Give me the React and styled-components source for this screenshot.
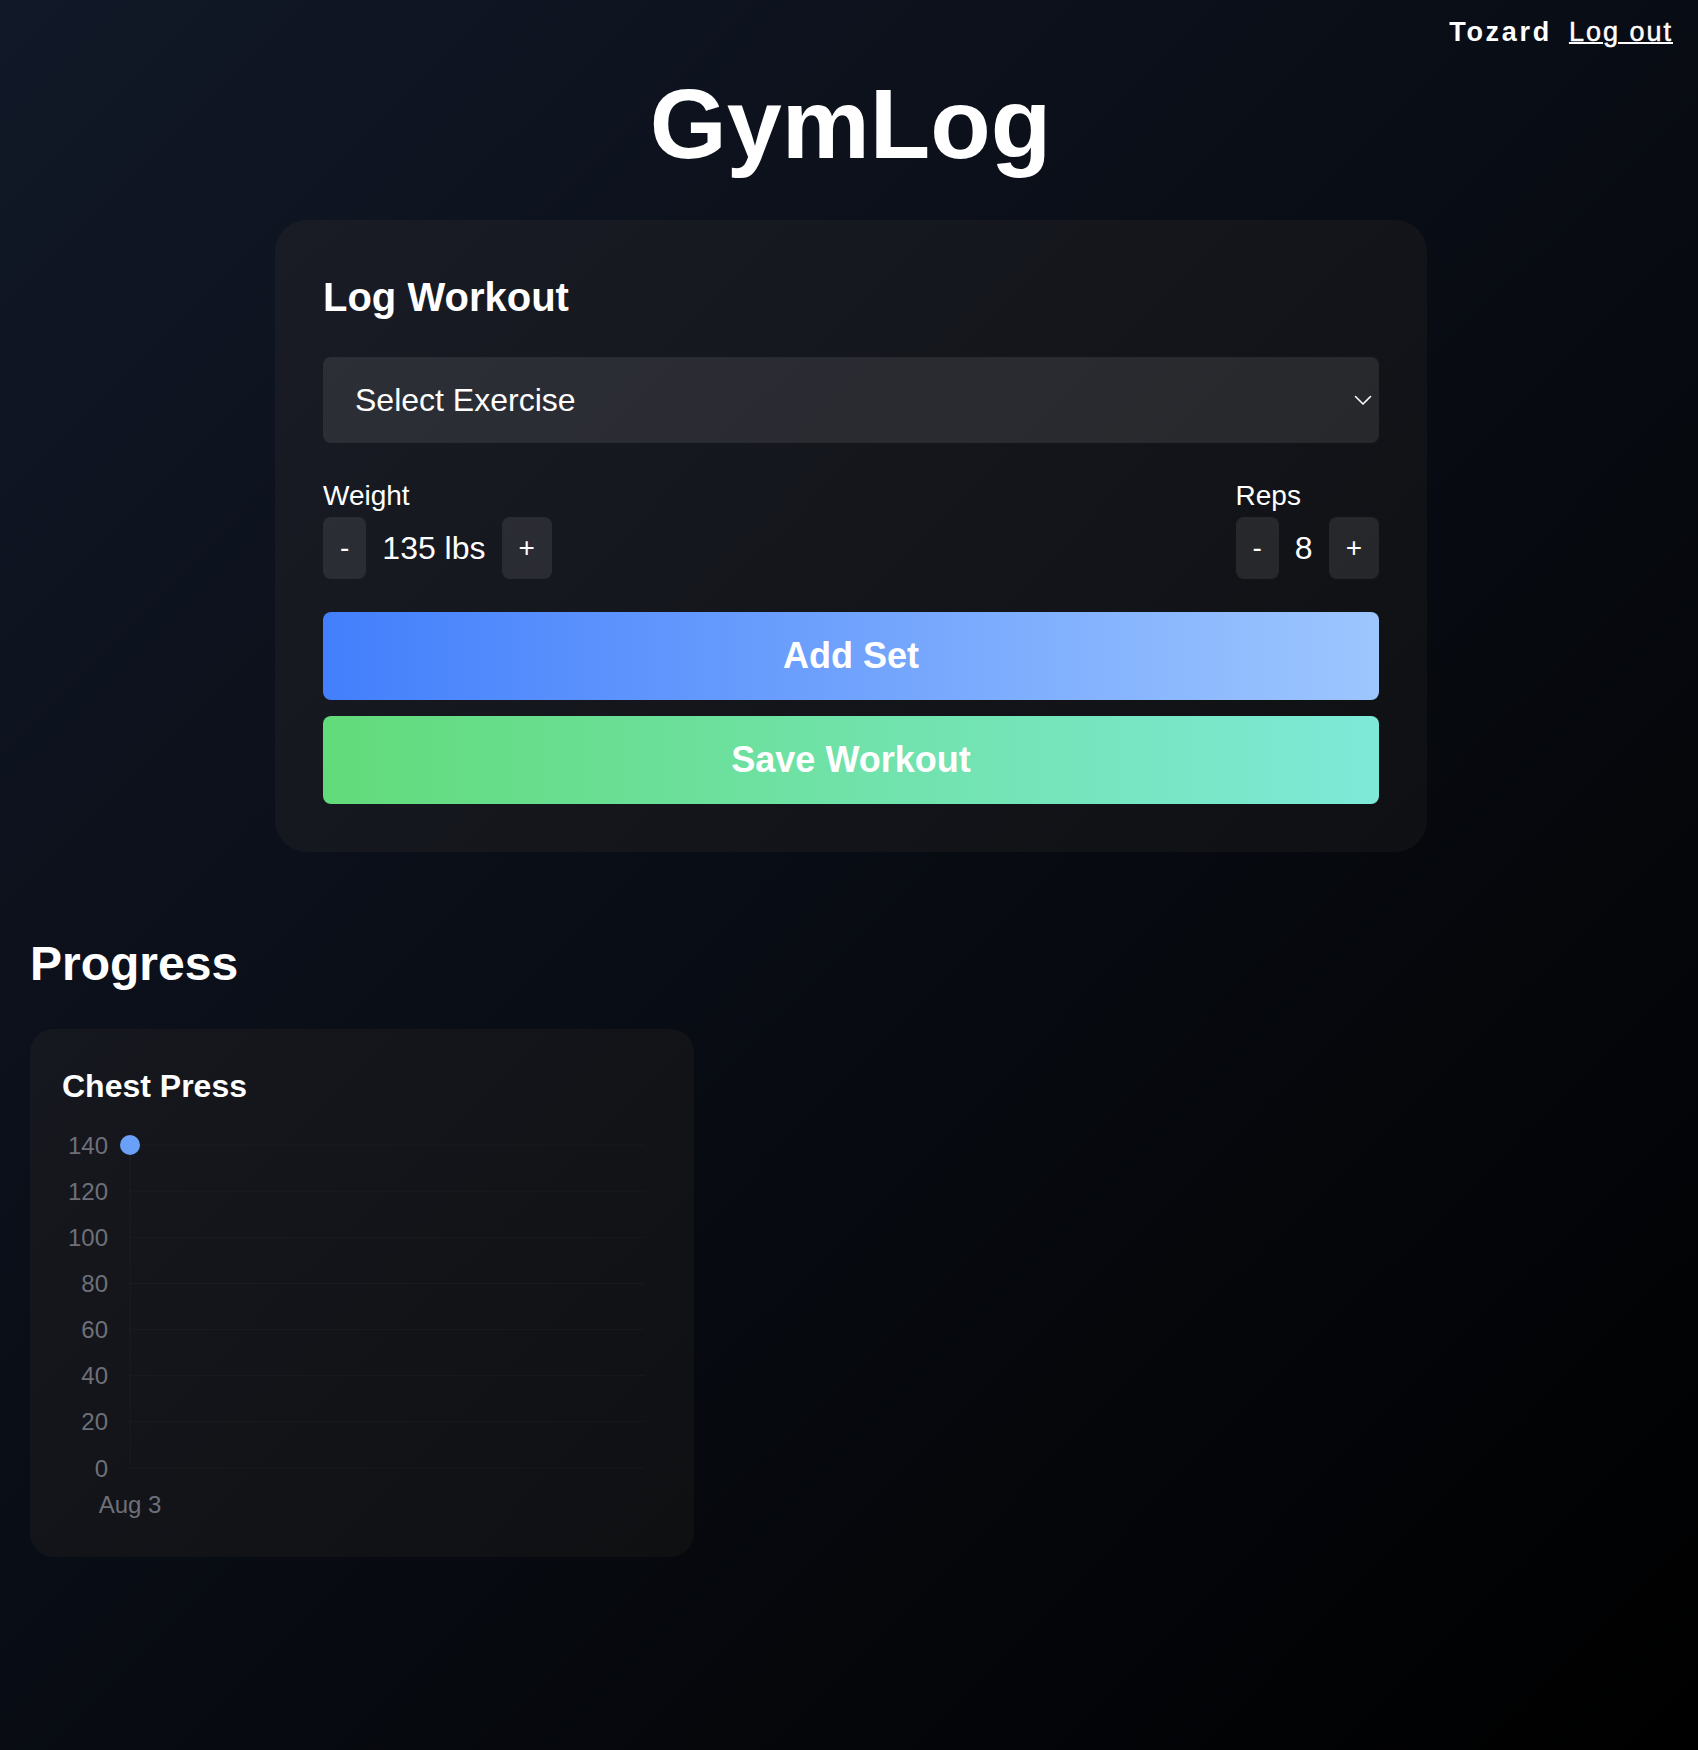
import React, { useState } from "react";
import styled, { createGlobalStyle } from "styled-components";

const GlobalStyle = createGlobalStyle`
    * { box-sizing: border-box; }
    html, body {
        margin: 0;
        min-height: 100%;
    }
    body {
        min-height: 100vh;
        background: linear-gradient(135deg, #111827 0%, #000000 100%);
        color: #ffffff;
        font-family: "Liberation Sans", Arial, sans-serif;
    }
`;

const Page = styled.div`
    min-height: 100vh;
    display: flex;
    flex-direction: column;
`;

const TopBar = styled.header`
    display: flex;
    justify-content: flex-end;
    align-items: center;
    gap: 17px;
    padding: 17px 25px 0 0;
    font-size: 27px;
    line-height: 30px;
    letter-spacing: 2px;
`;

const UserName = styled.span`
    font-weight: 700;
    letter-spacing: 2.7px;
`;

const LogoutLink = styled.a`
    color: #ffffff;
    font-weight: 400;
    -webkit-text-stroke: 0.5px #ffffff;
    text-decoration: underline;
    text-decoration-thickness: 2px;
    cursor: pointer;
`;

const Title = styled.h1`
    margin: 29px 0 48px;
    padding-left: 3px;
    text-align: center;
    font-size: 99px;
    line-height: 96px;
    font-weight: 700;
`;

const Card = styled.section`
    width: 1152px;
    margin: 0 auto 0 calc(50% - 574px);
    padding: 48px;
    border-radius: 32px;
    background: linear-gradient(135deg, #191c25 0%, #0f1013 100%);
    display: flex;
    flex-direction: column;
`;

const CardTitle = styled.h2`
    margin: 5px 0 36px;
    font-size: 40px;
    line-height: 48px;
    font-weight: 700;
`;

const SelectBox = styled.div`
    height: 86px;
    display: flex;
    align-items: center;
    justify-content: space-between;
    padding: 0 7px 0 32px;
    border-radius: 8px;
    background: rgba(255, 255, 255, 0.09);
    font-size: 32px;
    margin-bottom: 37px;
    cursor: pointer;
`;

const FieldRow = styled.div`
    display: flex;
    justify-content: space-between;
    margin-bottom: 33px;
`;

const Field = styled.div`
    display: flex;
    flex-direction: column;
    gap: 5px;
`;

const FieldLabel = styled.label`
    font-size: 28px;
    line-height: 32px;
`;

const Stepper = styled.div`
    display: flex;
    align-items: center;
    gap: 16px;
`;

const StepButton = styled.button`
    height: 62px;
    padding: 0 17px;
    border: none;
    border-radius: 8px;
    background: rgba(255, 255, 255, 0.09);
    color: #ffffff;
    font-family: inherit;
    font-size: 28px;
    cursor: pointer;
`;

const StepValue = styled.span`
    font-size: 32px;
`;

const ActionButton = styled.button`
    height: 88px;
    border: none;
    border-radius: 8px;
    color: #ffffff;
    font-family: inherit;
    font-size: 36px;
    font-weight: 700;
    cursor: pointer;
    background: ${({ $variant }) =>
        $variant === "save"
            ? "linear-gradient(90deg, #62db7a 0%, #7ee9d8 100%)"
            : "linear-gradient(90deg, #437ffc 0%, #9dc6fe 100%)"};

    & + & {
        margin-top: 16px;
    }
`;

const ProgressSection = styled.section`
    padding: 0 30px 40px;
    margin-top: 84px;
`;

const SectionTitle = styled.h2`
    margin: 0 0 37px;
    font-size: 48px;
    line-height: 56px;
    font-weight: 700;
`;

const ChartCard = styled.div`
    width: 664px;
    padding: 37px 32px 35px;
    border-radius: 24px;
    background: linear-gradient(135deg, #16181f 0%, #0f1012 100%);
`;

const ChartTitle = styled.h3`
    margin: 0 0 16px;
    font-size: 32px;
    line-height: 40px;
    font-weight: 700;
`;

const ChartSvg = styled.svg`
    display: block;
    font-family: "Liberation Sans", Arial, sans-serif;
`;

const Chevron = () => (
    <svg width="18" height="11" viewBox="0 0 18 11" fill="none">
        <path d="M1.5 1.5 L9 9 L16.5 1.5" stroke="#ffffff" strokeWidth="1.6" strokeLinecap="round" strokeLinejoin="round" />
    </svg>
);

const ticks = [140, 120, 100, 80, 60, 40, 20, 0];

const ProgressChart = ({ points }) => {
    const left = 68;
    const right = 583;
    const top = 23;
    const bottom = 346;
    const y = (v) => bottom - (v / 140) * (bottom - top);

    return (
        <ChartSvg width="600" height="400" viewBox="0 0 600 400">
            {ticks.map((t) => (
                <g key={t}>
                    <line x1={left} x2={right} y1={y(t)} y2={y(t)} stroke="rgba(255,255,255,0.03)" strokeWidth="1" />
                    <text x="46" y={y(t)} dominantBaseline="central" textAnchor="end" fontSize="24" fill="#6e7079">{t}</text>
                </g>
            ))}
            <line x1={left} x2={left} y1={top} y2={bottom} stroke="rgba(255,255,255,0.03)" strokeWidth="1" />
            {points.map((p) => (
                <g key={p.label}>
                    <circle cx={left} cy={y(p.value)} r="10" fill="#6aa0f8" />
                    <text x={left} y="382" dominantBaseline="central" textAnchor="middle" fontSize="24" fill="#6e7079">{p.label}</text>
                </g>
            ))}
        </ChartSvg>
    );
};

export default function App() {
    const [weight, setWeight] = useState(135);
    const [reps, setReps] = useState(8);

    return (
        <Page>
            <GlobalStyle />
            <TopBar>
                <UserName>Tozard</UserName>
                <LogoutLink>Log out</LogoutLink>
            </TopBar>
            <Title>GymLog</Title>

            <Card>
                <CardTitle>Log Workout</CardTitle>
                <SelectBox>
                    <span>Select Exercise</span>
                    <Chevron />
                </SelectBox>
                <FieldRow>
                    <Field>
                        <FieldLabel>Weight</FieldLabel>
                        <Stepper>
                            <StepButton onClick={() => setWeight(weight - 5)}>-</StepButton>
                            <StepValue>{weight} lbs</StepValue>
                            <StepButton onClick={() => setWeight(weight + 5)}>+</StepButton>
                        </Stepper>
                    </Field>
                    <Field>
                        <FieldLabel>Reps</FieldLabel>
                        <Stepper>
                            <StepButton onClick={() => setReps(reps - 1)}>-</StepButton>
                            <StepValue>{reps}</StepValue>
                            <StepButton onClick={() => setReps(reps + 1)}>+</StepButton>
                        </Stepper>
                    </Field>
                </FieldRow>
                <ActionButton>Add Set</ActionButton>
                <ActionButton $variant="save">Save Workout</ActionButton>
            </Card>

            <ProgressSection>
                <SectionTitle>Progress</SectionTitle>
                <ChartCard>
                    <ChartTitle>Chest Press</ChartTitle>
                    <ProgressChart points={[{ label: "Aug 3", value: 140 }]} />
                </ChartCard>
            </ProgressSection>
        </Page>
    );
}
